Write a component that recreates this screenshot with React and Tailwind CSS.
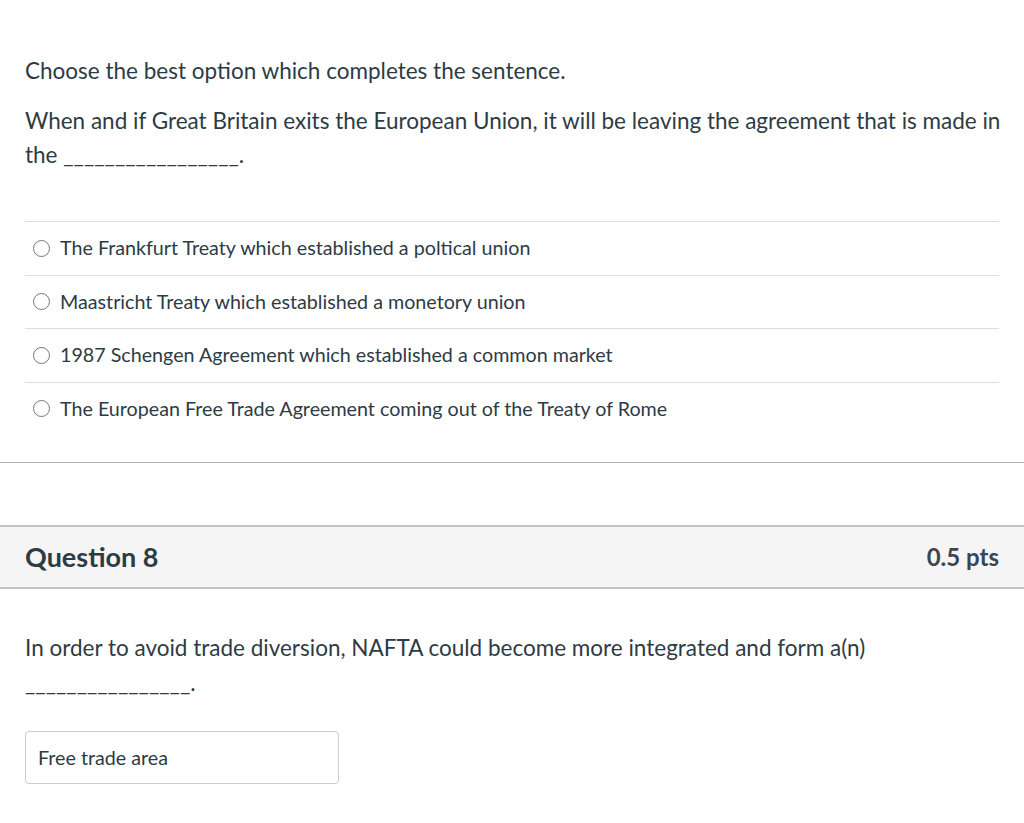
const options = [
  'The Frankfurt Treaty which established a poltical union',
  'Maastricht Treaty which established a monetory union',
  '1987 Schengen Agreement which established a common market',
  'The European Free Trade Agreement coming out of the Treaty of Rome',
]

const Radio = () => (
  <span className="w-[17px] h-[17px] rounded-full border border-[#6b7780] bg-white shrink-0" />
)

export default function App() {
  return (
    <div className="min-h-[823px] bg-white text-[#2d3b45] font-['Lato','Liberation_Sans',sans-serif]">
      {/* Question 7 body */}
      <div className="px-[25px] pt-[54px]">
        <p className="text-[22.5px] leading-[34px]">Choose the best option which completes the sentence.</p>
        <p className="mt-[16px] mr-[-10px] text-[22.5px] leading-[34px]">
          When and if Great Britain exits the European Union, it will be leaving the agreement that is made in the _________________.
        </p>
        <div className="mt-[49px] w-[974px]">
          {options.map((o) => (
            <div key={o} className="flex items-center gap-[10px] h-[53.5px] border-t border-[#dcdfe1] pl-[8px] text-[19.7px]">
              <Radio />
              <span>{o}</span>
            </div>
          ))}
        </div>
      </div>

      <div className="mt-[27px] border-t border-[#b4b4b4]" />

      {/* Question 8 */}
      <div className="mt-[62px] h-[64px] bg-[#f5f5f5] border-y-2 border-[#c4c4c4] flex items-center justify-between px-[25px]">
        <h2 className="text-[27px] font-bold">Question 8</h2>
        <span className="text-[24px] font-bold text-[#3c4650]">0.5 pts</span>
      </div>
      <div className="px-[25px] pt-[42px]">
        <p className="text-[22.5px] leading-[34px]">
          In order to avoid trade diversion, NAFTA could become more integrated and form a(n)
        </p>
        <p className="mt-[1px] text-[22.5px] leading-[34px]">________________.</p>
        <div className="mt-[31px] w-[314px] h-[53px] border border-[#c7cdd1] rounded-[4px] flex items-center px-[12px] text-[19.7px]">
          Free trade area
        </div>
      </div>
    </div>
  )
}
